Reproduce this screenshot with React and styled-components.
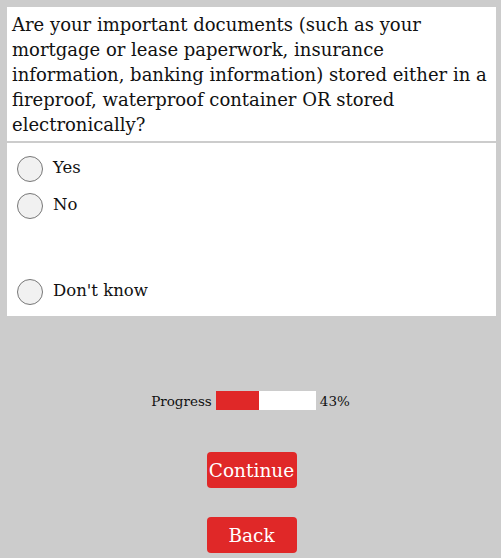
import React from "react";
import styled, { createGlobalStyle } from "styled-components";

const GlobalStyle = createGlobalStyle`
  body {
    margin: 0;
    background-color: #cccccc;
    font-family: "DejaVu Serif", "Liberation Serif", serif;
    color: #111111;
  }
`;

const Page = styled.main`
  padding: 7px 5px 0 7px;
`;

const Question = styled.div`
  padding: 5px 5px 4px 5px;
  background-color: #ffffff;
  font-size: 18px;
  line-height: 25px;
`;

const Options = styled.div`
  display: flex;
  flex-direction: column;
  margin-top: 2px;
  padding: 13px 10px 11px 10px;
  background-color: #ffffff;
`;

const Option = styled.label`
  display: flex;
  align-items: center;
  gap: 10px;
  height: 26px;
  margin-bottom: ${(p) => (p.$last ? 0 : "11px")};
  font-size: 16.5px;
`;

const Spacer = styled.div`
  height: 49px;
`;

const Radio = styled.span`
  box-sizing: border-box;
  width: 26px;
  height: 26px;
  border: 1.5px solid #777777;
  border-radius: 50%;
  background-color: #f1f1f1;
  flex-shrink: 0;
`;

const Label = styled.span`
  position: relative;
  top: -2px;
`;

const Footer = styled.div`
  display: flex;
  flex-direction: column;
  align-items: center;
  padding-top: 75px;
`;

const ProgressRow = styled.div`
  display: flex;
  align-items: center;
  gap: 4px;
  margin-left: -2px;
  font-size: 13.5px;
`;

const Track = styled.div`
  width: 100px;
  height: 19px;
  background-color: #ffffff;
`;

const Fill = styled.div`
  height: 100%;
  background-color: #e02828;
`;

const Button = styled.button`
  width: 90px;
  height: 36px;
  margin-top: ${(p) => p.$gap}px;
  padding: 0;
  border: none;
  border-radius: 4px;
  background-color: #e02828;
  color: #ffffff;
  font-family: inherit;
  font-size: 18.5px;
  cursor: pointer;
`;

const answers = ["Yes", "No", null, "Don't know"];

const App = () => {
  const progress = 43;
  return (
    <>
      <GlobalStyle />
      <Page>
        <Question>
          Are your important documents (such as your mortgage or lease
          paperwork, insurance information, banking information) stored either
          in a fireproof, waterproof container OR stored electronically?
        </Question>
        <Options>
          {answers.map((a, i) =>
            a ? (
              <Option key={i} $last={i === answers.length - 1}>
                <Radio />
                <Label>{a}</Label>
              </Option>
            ) : (
              <Spacer key={i} />
            )
          )}
        </Options>
        <Footer>
          <ProgressRow>
            Progress
            <Track>
              <Fill style={{ width: `${progress}%` }} />
            </Track>
            {progress}%
          </ProgressRow>
          <Button $gap={42}>Continue</Button>
          <Button $gap={29}>Back</Button>
        </Footer>
      </Page>
    </>
  );
};

export default App;
